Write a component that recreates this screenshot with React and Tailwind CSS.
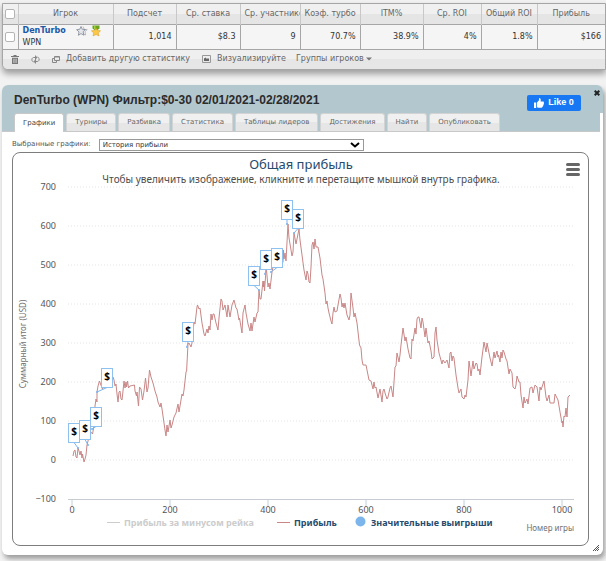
import { useState } from "react";

const columns = [
  { name: "Подсчет", value: "1,014" },
  { name: "Ср. ставка", value: "$8.3" },
  { name: "Ср. участников", value: "9" },
  { name: "Коэф. турбо", value: "70.7%" },
  { name: "ITM%", value: "38.9%" },
  { name: "Ср. ROI", value: "4%" },
  { name: "Общий ROI", value: "1.8%" },
  { name: "Прибыль", value: "$166" },
];

const tabs = [
  "Графики",
  "Турниры",
  "Разбивка",
  "Статистика",
  "Таблицы лидеров",
  "Достижения",
  "Найти",
  "Опубликовать",
];

const profitLine =
  "73,456 74,451 75,450 76,457 77,458 78,448 79,451 80,455 81,451 82,458 82.5,454 84,462 85,459 86,455 87,445 89,437 90,431 92.5,434 94,426 95,406 96,399 97,402 97,392 98,386 99.5,381 100.5,384 102.5,389 105,384 " +
  "113,377 114,380 115,386 116,384 117,394 118,402 119,392 120,391 121,399 122,400 123,391 124,381 125,388 126,382 126.5,387 127.5,381 128.5,388 130,386 134.5,385 135,391 136.5,396 137,392 138.5,406 139.5,387 141,389 142.5,400 144,391 145.5,378 147,392 148,388 149.5,370 " +
  "151,377 153,383 155,391 157,397 158,402 160,407 161,403 162,409 165,430 166,436 167,425 168,432 170,420 171,428 172,425 174,417 176,413 178,404 179,412 182,394 183,396 184,390 186,372 186.6,371 188,344 189,343 191,347 192,343 194,322 195,324 197,307 197.5,305 199,309 200,308 " +
  "202,323 204,334 205,336 207,329 208,333 209,326 210,330 211,314 212,320 213,314 214,314 216,323 218,330 219,318 221,299 222,301 223,310 225,305 227,317 228,305 230,317 232,305 234,300 236,308 237,309 239,320 239.5,318 242,333 243,313 245,305 246,313 248,324 250,331 251,323 252,331 254,317 255,322 257,313 258,312 259,290 " +
  "260,299 261,299 263,281 263.5,287 264,281 264.5,291 266,270 266.5,270 268,287 269,283 270,289 272,272 273,267 280,267 283,262 283.5,250 284,259 285,253 286,261 288,224 289,238 292,256 293,252 294,233 296,244 299,229 300,240 302,255 304,270 306,280 307,271 308,274 309,282 310,283 311,267 312,245 313,242 314,249 315,239 316,247 318,247 " +
  "320,258 322,275 323,279 325,293 326,304 327,301 328,308 329,313 331,321 332,324 333,313 334,307 335,312 337,311 338,305 340,294 341,298 342,307 343,303 344,308 345,303 347,315 349,320 350,315 351,293 353,308 354,317 355,313 357,323 359.5,345 361,348 362,360 363,365 366,365 369,380 371,381 373,389 374,382 375,388 376,387 378,398 380,389 382,402 383,391 384,389 385,393 387,399 388,397 390,388 391,386 393,397 395,367 396,366 397,353 399,362 400,355 " +
  "401,345 403,328 405,341 406,337 408,349 410,358 411,359 412,339 413,341 415,328 416,334 417,319 418,317 419,317 421,328 422,318 423,322 425,337 426,328 428,343 429,341 431,351 432,359 434,357 435,333 436,327 437,340 439,353 442,364 443,360 445,363 447,360 449,368 450,353 451,352 452,361 453,356 454,358 456,375 458,388 459,393 461,389 462,397 464,399 465,395 466,397 468,380 469,361 470,368 471,376 473,361 474,369 476,363 477,364 478,371 479,369 480,375 " +
  "482,357 484,342 486,352 487,343 488,348 490,358 492,366 494,352 495,358 497,351 498,357 498.5,355 500,362 501,352 502,358 503,350 504,352 506,359 507,361 509,374 510,369 512,373 513,387 515,389 516,385 517,376 519,382 520,382 521,395 523,408 524,397 525,403 527,399 528,404 530,388 532,387 533,393 535,385 537,387 539,401 540,387 541,390 544,381 546,397 547,401 549,395 550,403 554,403 555,394 557,398 558,400 560,412 562,423 562.5,421 563,427 564,416 565,417 566,408 567,417 568,397 569,396 570,395";

const flags = [
  { x: 68.5, y: 423.5, tip: [78, 448] },
  { x: 79.5, y: 420.5, tip: [88, 445] },
  { x: 90.5, y: 407.5, tip: [92, 429] },
  { x: 101.5, y: 368.5, tip: [97, 392] },
  { x: 182.5, y: 322.5, tip: [187, 347] },
  { x: 248.5, y: 266.5, tip: [259, 290] },
  { x: 260.5, y: 250.5, tip: [265, 274] },
  { x: 271.5, y: 248.5, tip: [271, 272] },
  { x: 281.5, y: 200.5, tip: [287, 224] },
  { x: 292.5, y: 209.5, tip: [294, 233] },
];

const yTicks = [700, 600, 500, 400, 300, 200, 100, 0, -100];
const xTicks = [0, 200, 400, 600, 800, 1000];

const yPos = (v) => 460 - v * 0.39;
const xPos = (v) => 72 + v * 0.49;

const Checkbox = ({ label }) => (
  <input
    type="checkbox"
    aria-label={label}
    className="block mx-auto w-[10px] h-[10px] appearance-none rounded-[2px] border border-[#b4b4b4] bg-white checked:bg-blue-600"
  />
);

const StarIcon = () => (
  <svg viewBox="0 0 12 12" className="w-3 h-3">
    <path d="M7 1.5 8.2 4.3l3.1.3L9 6.700l.7 3.300L7 8.600" fill="#f2f3f5" stroke="#a3a8b3" strokeWidth=".7" />
    <path d="M5 1.5 6.3 4.3l3.2.3-2.4 2.1.8 3.5L5 8.600 2.400 10.300 3 6.900.6 4.700l3.100-.4z" fill="#e4e6ea" stroke="#7f8796" strokeWidth=".8" />
  </svg>
);

const MedalIcon = () => (
  <svg viewBox="0 0 12 12" className="w-3 h-3">
    <path d="M2.5.5h7v3L6 6 2.500 3.500z" fill="#69a51c" />
    <path d="M4 1h1.500v3H4z" fill="#9fd044" />
    <path d="M6 3.200 7.300 5.500l3.300.3-2.300 2.100.7 3-3-1.400-3 1.400.7-3L1.400 5.800l3.300-.3z" fill="#fbc84a" stroke="#d99a20" strokeWidth=".5" />
  </svg>
);

const TrashIcon = () => (
  <svg viewBox="0 0 8 9" className="w-2 h-[9px]" fill="#777">
    <path d="M0 1h2.500V0h3v1H8v1H0zM1 2.700h6V9H1z" />
    <path d="M2.700 3.700v4.300M4 3.700v4.300M5.300 3.700v4.300" stroke="#e6e6e6" strokeWidth=".6" />
  </svg>
);

const RefreshIcon = () => (
  <svg viewBox="0 0 9 9" className="w-[9px] h-[9px]" fill="none" stroke="#888" strokeWidth="1">
    <path d="M2.500 7C.5 6.500.2 3 2.500 2.500H5M6.500 2c2 .5 2.300 4 0 4.500H4" />
    <path d="M4 0 6.500 2.500 4 5zM5 4 2.500 6.500 5 9z" fill="#888" stroke="none" />
  </svg>
);

const WindowsIcon = () => (
  <svg viewBox="0 0 8 7" className="w-2 h-[7px]" fill="none" stroke="#888" strokeWidth="1">
    <path d="M2.500.5h5v4h-5zM2.500 2.500h-2v4h4v-2" />
    <path d="M2.500 1h5" />
  </svg>
);

const PictureIcon = () => (
  <svg viewBox="0 0 9 8" className="w-[9px] h-2">
    <path d="M.5.5h8v7h-8z" fill="none" stroke="#999" />
    <path d="M2 6V3.500l1.500-1L5 4l1-1 1 1v2z" fill="#666" />
  </svg>
);

const PlayersTable = () => (
  <div className="ml-[2px] mt-[3px] overflow-hidden rounded-bl-md border border-[#a6a6a6] bg-[#ececec] shadow-[0_4px_6px_rgba(0,0,0,0.35)]">
    <table className="w-full table-fixed border-collapse text-[8px] leading-[12px]">
      <colgroup>
        <col className="w-[15px]" />
        <col className="w-[95px]" />
        <col className="w-[63px]" />
        <col className="w-[64px]" />
        <col className="w-[60px]" />
        <col className="w-[60px]" />
        <col className="w-[63px]" />
        <col className="w-[58px]" />
        <col className="w-[56px]" />
        <col className="w-[68px]" />
      </colgroup>
      <thead>
        <tr className="h-5 bg-linear-to-b from-[#f0f0f0] from-50% to-[#e5e5e5] to-50% text-[#666]">
          <th className="border-r border-[#c8c8c8] p-0">
            <Checkbox label="Выбрать все" />
          </th>
          <th className="border-r border-[#c8c8c8] p-0 font-normal">Игрок</th>
          {columns.map((c) => (
            <th
              key={c.name}
              className="overflow-hidden whitespace-nowrap border-r border-[#c8c8c8] px-1 py-0 font-normal last:border-r-0"
            >
              {c.name}
            </th>
          ))}
        </tr>
      </thead>
      <tbody>
        <tr className="h-6 border-y border-[#a6a6a6] bg-[#f5f5f5] text-[#333]">
          <td className="border-r border-[#a6a6a6] p-0">
            <Checkbox label="DenTurbo" />
          </td>
          <td className="border-r border-[#a6a6a6] py-0 pl-1 pr-0">
            <div className="flex items-center">
              <a href="#DenTurbo" className="mr-[10px] font-bold text-[#2058a8]">
                DenTurbo
              </a>
              <StarIcon />
              <span className="ml-[2px]">
                <MedalIcon />
              </span>
            </div>
            <div>WPN</div>
          </td>
          {columns.map((c) => (
            <td key={c.name} className="border-r border-[#a6a6a6] py-0 pl-0 pr-1 text-right last:border-r-0">
              {c.value}
            </td>
          ))}
        </tr>
      </tbody>
    </table>
    <div className="flex h-[19px] items-center bg-linear-to-b from-[#efefef] from-50% to-[#e6e6e6] to-50% pl-2 text-[8px] leading-[12px] text-[#666]">
      <button type="button" aria-label="Удалить" className="mr-3">
        <TrashIcon />
      </button>
      <button type="button" aria-label="Обновить" className="mr-3">
        <RefreshIcon />
      </button>
      <button type="button" className="mr-3 flex items-center gap-[6px] whitespace-nowrap">
        <WindowsIcon />
        Добавить другую статистику
      </button>
      <button type="button" className="mr-[10px] flex items-center gap-[6px] whitespace-nowrap">
        <PictureIcon />
        Визуализируйте
      </button>
      <button type="button" className="flex items-center gap-[2px] whitespace-nowrap">
        Группы игроков
        <svg viewBox="0 0 6 4" className="h-1 w-[6px]" fill="#777">
          <path d="M0 .5h6l-3 3z" />
        </svg>
      </button>
    </div>
  </div>
);

const Chart = () => (
  <div className="relative rounded-lg border border-[#7d7d7d] bg-white">
    <svg viewBox="13 153 575 392" className="block h-auto w-full font-['Noto_Sans',sans-serif]">
      <text x="301" y="169" textAnchor="middle" fontSize="13" fill="#274b6d">
        Общая прибыль
      </text>
      <text x="301" y="183" textAnchor="middle" fontSize="10" fill="#4d4d4d">
        Чтобы увеличить изображение, кликните и перетащите мышкой внутрь графика.
      </text>

      {yTicks.map((v) => (
        <g key={v}>
          {v > -100 && (
            <line x1="68" x2="573" y1={yPos(v)} y2={yPos(v)} stroke="#d4d4d4" strokeWidth="1" strokeDasharray="1 2" opacity="0.6" />
          )}
          <text x="56" y={yPos(v) + 3} textAnchor="end" fontSize="9" fill="#555">
            {v < 0 ? `−${-v}` : v}
          </text>
        </g>
      ))}

      <line x1="68" x2="574" y1="499.5" y2="499.5" stroke="#c6ccd2" />
      {xTicks.map((v) => (
        <g key={v}>
          <line x1={xPos(v)} x2={xPos(v)} y1="500" y2="507" stroke="#c0d0e0" />
          <text x={xPos(v)} y="513" textAnchor="middle" fontSize="9" fill="#555">
            {v}
          </text>
        </g>
      ))}

      <text transform="translate(26 344) rotate(-90)" textAnchor="middle" fontSize="8" fill="#707070">
        Суммарный итог (USD)
      </text>
      <text x="574" y="531" textAnchor="end" fontSize="8" fill="#707070">
        Номер игры
      </text>

      <polyline points={profitLine} fill="none" stroke="#c98686" strokeWidth="1" strokeLinejoin="round" />

      {flags.map((f) => (
        <g key={f.x}>
          <path
            d={`M${f.tip[0]} ${f.tip[1]}L${f.x + 5.5} ${f.y + 19}`}
            stroke="#7cb5ec"
            strokeWidth="1"
          />
          <circle cx={f.tip[0]} cy={f.tip[1]} r="1" fill="#7cb5ec" />
          <rect x={f.x} y={f.y} width="11" height="19" fill="#fff" stroke="#8fc1f0" />
          <text x={f.x + 5.5} y={f.y + 11} textAnchor="middle" fontSize="10" fontWeight="bold" fill="#000">
            $
          </text>
        </g>
      ))}

      <g fontSize="9" fontWeight="bold">
        <line x1="107" x2="120" y1="522.5" y2="522.5" stroke="#ccc" />
        <text x="124" y="526" fill="#ccc">
          Прибыль за минусом рейка
        </text>
        <line x1="277" x2="290" y1="522.5" y2="522.5" stroke="#c98686" />
        <text x="294" y="526" fill="#274b6d">
          Прибыль
        </text>
        <circle cx="360.5" cy="521.5" r="5" fill="#7cb5ec" />
        <text x="371" y="526" fill="#274b6d">
          Значительные выигрыши
        </text>
      </g>
    </svg>
    <button type="button" aria-label="Меню графика" className="absolute right-2 top-2 flex flex-col gap-[2px] py-[2px]">
      <span className="h-[3px] w-[14px] rounded-full bg-[#666]" />
      <span className="h-[3px] w-[14px] rounded-full bg-[#666]" />
      <span className="h-[3px] w-[14px] rounded-full bg-[#666]" />
    </button>
  </div>
);

const App = () => {
  const [activeTab, setActiveTab] = useState("Графики");

  return (
    <div className="min-h-screen overflow-hidden bg-[#f2f2f2] font-['DejaVu_Sans',sans-serif]">
      <PlayersTable />

      <div className="relative ml-[2px] mr-[3px] mt-[15px] rounded-md bg-white shadow-[2px_4px_5px_rgba(0,0,0,0.35)]">
        <div className="rounded-t-md bg-[#b2c7ce]">
          <div className="flex h-7 items-start justify-between pl-3 pr-[3px]">
            <h1 className="pt-2 font-['Liberation_Sans',sans-serif] text-[12px] font-bold leading-[14px] text-[#2b2b2b]">
              DenTurbo (WPN) Фильтр:$0-30 02/01/2021-02/28/2021
            </h1>
            <div className="flex gap-[13px]">
              <button
                type="button"
                className="mt-[10px] flex h-4 w-[54px] items-center justify-center gap-1 rounded-[2px] bg-[#1877f2] font-['Liberation_Sans',sans-serif] text-[9px] font-bold text-white"
              >
                <svg viewBox="0 0 10 10" className="h-[10px] w-[10px]" fill="#fff">
                  <path d="M0 4.500h2.200V10H0zM3 4.500 5 2.200V.3C6.500 0 7.200 1.200 6.500 3.500h2.700c.8 0 1 .8.500 1.300.4.500.3 1.100-.2 1.400.3.600.1 1.100-.4 1.400.2.700-.1 1.200-.8 1.200.1.700-.3 1-.9 1H4.500L3 9.200z" />
                </svg>
                Like 0
              </button>
              <button type="button" aria-label="Закрыть" className="mt-1 h-2 w-[6px]">
                <svg viewBox="0 0 6 6" className="h-[6px] w-[6px]" stroke="#222" strokeWidth="2">
                  <path d="M.7.7l4.600 4.600M5.300.7.7 5.300" />
                </svg>
              </button>
            </div>
          </div>
        </div>
        <div className="mr-[3px] flex gap-[2px] border-b border-[#c8c8c8] bg-[#b2c7ce] pl-3 text-[7px] leading-[10px]">
          {tabs.map((t) => (
            <button
              key={t}
              type="button"
              onClick={() => setActiveTab(t)}
              className={
                t === activeTab
                  ? "-mb-px h-[19px] whitespace-nowrap rounded-t-[3px] border border-b-0 border-[#c8c8c8] bg-white px-2 text-[#444]"
                  : "h-[18px] whitespace-nowrap rounded-t-[3px] border border-b-0 border-[#d3d3d3] bg-linear-to-b from-[#f0f0f0] from-50% to-[#e6e6e6] to-50% px-2 text-[#666]"
              }
            >
              {t}
            </button>
          ))}
        </div>

        <div className="pb-[9px] pl-[10px] pr-[14px] pt-[7px]">
          <div className="mb-px flex h-3 items-center text-[7px] text-[#555]">
            <label htmlFor="chart" className="mr-2 whitespace-nowrap">
              Выбранные графики:
            </label>
            <div className="relative">
              <select
                id="chart"
                className="block h-3 w-[265px] appearance-none border border-[#999] bg-white pl-[3px] text-[7px] leading-[10px] text-[#333]"
              >
                <option>История прибыли</option>
              </select>
              <svg viewBox="0 0 10 6" className="pointer-events-none absolute right-1 top-[3px] h-[6px] w-[10px]" fill="none" stroke="#000" strokeWidth="2">
                <path d="M1 1 5 4.500 9 1" />
              </svg>
            </div>
          </div>
          <Chart />
        </div>

        <svg viewBox="0 0 6 6" className="absolute bottom-1 right-1 h-[6px] w-[6px]" stroke="#555" strokeWidth="1">
          <path d="M0 6 6 0M2 6 6 2M4 6 6 4" />
        </svg>
      </div>
    </div>
  );
};

export default App;
